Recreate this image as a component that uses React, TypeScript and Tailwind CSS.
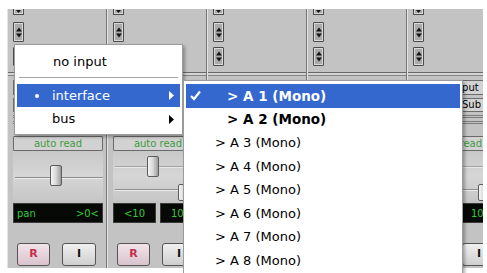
import React from "react";

const UpDown = ({ className = "", stub = false }: { className?: string; stub?: boolean }) => (
  <div
    className={`w-[11px] border-[#4b4b4b] bg-[#a9a9a9] shadow-[inset_0_0_0_1px_#d9d9d9] flex flex-col items-center justify-center ${
      stub ? "border-x border-b" : "border rounded-[1px]"
    } ${className}`}
  >
    {stub ? (
      <svg width="5" height="3" viewBox="0 0 5 3">
        <path d="M0 0H5L2.5 3Z" fill="#151515" />
      </svg>
    ) : (
      <svg width="6" height="11" viewBox="0 0 6 11">
        <path d="M3 0.5L6 4.5H0Z" fill="#151515" />
        <path d="M0 6.5H6L3 10.5Z" fill="#151515" />
      </svg>
    )}
  </div>
);

const Knob = ({ className = "" }: { className?: string }) => (
  <div
    className={`absolute w-[12px] rounded-[2px] border border-[#5c5c5c] bg-gradient-to-r from-[#f4f4f4] via-[#d8d8d8] to-[#9c9c9c] ${className}`}
  />
);

// ioText / lowerText: strips that sit under the open menus keep their frames but show no labels
const Strip = ({
  stereo,
  last,
  ioText,
  lowerText = true,
}: {
  stereo?: boolean;
  last?: boolean;
  ioText?: boolean;
  lowerText?: boolean;
}) => (
  <div
    className={`h-full shrink-0 overflow-hidden flex flex-col border-l border-l-[#e4e4e4] ${
      last ? "w-[76px]" : "w-[100px] border-r border-r-[#767676]"
    }`}
  >
    {/* inserts / sends arrows */}
    <div className="h-[63px] pl-[5px] flex flex-col">
      <UpDown stub className="h-[6px]" />
      <UpDown className="h-[20px] mt-[7px]" />
      <UpDown className="h-[19px] mt-[5px]" />
    </div>
    <div className="h-[4px] border-y border-t-[#6a6a6a] border-b-[#858585] bg-[#d4d4d4]" />

    <div className="w-[90px] ml-[5px] flex flex-col">
      {/* i/o */}
      <div className="h-[59px] flex flex-col">
        <div className="mt-[4px] h-[15px] border border-[#6c6c6c] bg-[#d3d3d3] flex items-center justify-center text-[10px] text-black leading-none">
          {ioText && "no input"}
        </div>
        <div className="mt-[3px] h-[14px] border border-[#6c6c6c] bg-[#d3d3d3] flex items-center justify-center text-[10px] text-black leading-none">
          {ioText && "Main Sub"}
        </div>
        <div className="mt-[3px] h-[3px] border-y border-[#7a7a7a]" />
        <div className="mt-[3px] h-[3px] border-y border-[#7a7a7a]" />
      </div>

      {/* automation */}
      <div className="mt-[1px] h-[15px] border border-[#6a6a6a] rounded-[1px] bg-[#d2d2d2] flex items-center justify-center text-[10px] text-[#3d9b3d] leading-none">
        {lowerText && "auto read"}
      </div>

      {/* pan sliders */}
      <div className="relative h-[50px] bg-gradient-to-b from-[#c8c8c8] via-[#d6d6d6] to-[#c6c6c6]">
        {stereo ? (
          <>
            <div className="absolute left-[2px] right-0 top-[15px] h-[2px] border-t border-t-[#a2a2a2] border-b border-b-[#e8e8e8]" />
            <div className="absolute left-[2px] right-0 top-[38px] h-[2px] border-t border-t-[#8e8e8e] border-b border-b-[#ececec]" />
            <Knob className="left-[34px] top-[5px] h-[21px]" />
            <Knob className="left-[65px] top-[33px] h-[17px]" />
          </>
        ) : (
          <>
            <div className="absolute left-[2px] right-0 top-[26px] h-[2px] border-t border-t-[#8e8e8e] border-b border-b-[#ececec]" />
            <Knob className="left-[37px] top-[14px] h-[21px]" />
          </>
        )}
      </div>

      {/* pan display */}
      <div className="mt-[2px] h-[20px] flex gap-[4px]">
        {stereo ? (
          <>
            <div className="w-[44px] bg-[#070907] border border-[#3a3a3a] flex items-center justify-center text-[10px] text-[#35c83a]">
              {lowerText && "<10"}
            </div>
            <div className="w-[44px] bg-[#070907] border border-[#3a3a3a] flex items-center justify-center text-[10px] text-[#35c83a]">
              {lowerText && "10>"}
            </div>
          </>
        ) : (
          <div className="flex-1 bg-[#070907] border border-[#3a3a3a] flex items-center justify-between px-[3px] text-[10px] text-[#35c83a]">
            <span>{lowerText && "pan"}</span>
            <span>{lowerText && ">0<"}</span>
          </div>
        )}
      </div>

      {/* record / input buttons */}
      <div className="mt-[20px] h-[23px] flex gap-[12px] pl-[4px]">
        <div className="w-[33px] rounded-[3px] border border-[#555] bg-gradient-to-b from-[#f2e4ea] to-[#d9c3cc] flex items-center justify-center text-[11px] font-bold text-[#c4304a]">
          {lowerText && "R"}
        </div>
        <div className="w-[34px] rounded-[3px] border border-[#555] bg-gradient-to-b from-[#f0f0f0] to-[#cfcfcf] flex items-center justify-center text-[11px] font-bold text-[#111]">
          {lowerText && "I"}
        </div>
      </div>
    </div>
  </div>
);

const Arrow = ({ color }: { color: string }) => (
  <svg width="5" height="9" viewBox="0 0 5 9">
    <path d="M0 0L5 4.5L0 9Z" fill={color} />
  </svg>
);

const channels = [1, 2, 3, 4, 5, 6, 7, 8];

export default function App() {
  return (
    <div className="relative w-[487px] h-[273px] overflow-hidden bg-white pt-[9px] pl-[7px] font-['DejaVu_Sans',Verdana,sans-serif]">
      {/* mixer window */}
      <div className="w-[476px] h-[259px] flex bg-[#c3c3c3]">
        <Strip />
        <Strip stereo />
        <Strip lowerText={false} />
        <Strip stereo lowerText={false} />
        <Strip stereo last ioText />
      </div>

      {/* input menu */}
      <div className="absolute left-[14px] top-[44px] w-[169px] h-[91px] bg-white border border-[#9c9c9c] shadow-[2px_2px_3px_rgba(0,0,0,0.3)] p-[2px] flex flex-col text-[13px] text-black">
        <div className="h-[30px] pl-[36px] flex items-center">no input</div>
        <div className="mx-[2px] h-[2px] border-t border-t-[#a6a6a6] border-b border-b-white" />
        <div className="mt-[5px] h-[23px] bg-[#3468cf] text-white flex items-center pl-[18px] pr-[6px]">
          <span className="w-[4px] h-[4px] rounded-full bg-white" />
          <span className="ml-[13px] flex-1">interface</span>
          <Arrow color="#ffffff" />
        </div>
        <div className="h-[24px] flex items-center pl-[35px] pr-[6px]">
          <span className="flex-1">bus</span>
          <Arrow color="#000000" />
        </div>
      </div>

      {/* interface submenu */}
      <div className="absolute left-[183px] top-[80px] w-[280px] h-[200px] bg-white border border-[#9c9c9c] shadow-[2px_2px_3px_rgba(0,0,0,0.3)] px-[2px] pt-[3px] flex flex-col text-black">
        {channels.map((n) => {
          const selected = n === 1;
          const bold = n <= 2;
          return (
            <div
              key={n}
              className={`relative h-[23.5px] shrink-0 flex items-center whitespace-nowrap ${
                selected ? "bg-[#3468cf] text-white" : ""
              } ${bold ? "pl-[41px] text-[13.5px] font-bold" : "pl-[29px] text-[13px]"}`}
            >
              {selected && (
                <svg className="absolute left-[4px] top-[6px]" width="11" height="11" viewBox="0 0 11 11">
                  <path d="M1 6L4 9L10 1.5" fill="none" stroke="#fff" strokeWidth="2.2" />
                </svg>
              )}
              &gt; A {n} (Mono)
            </div>
          );
        })}
      </div>
    </div>
  );
}
